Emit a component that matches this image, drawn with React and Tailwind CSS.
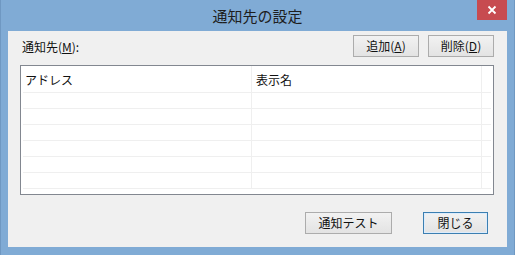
import React from 'react';

const font = { fontFamily: '"Noto Sans CJK JP", "Noto Sans", sans-serif' };

const Btn = ({ children, w, primary }) => (
  <button
    type="button"
    className={
      'h-[22px] flex items-center justify-center text-[12px] leading-none text-[#111] border bg-gradient-to-b from-[#f2f2f2] to-[#e3e3e3] ' +
      (primary ? 'border-[#3c7fb1] shadow-[inset_0_0_0_1px_#dcecfc]' : 'border-[#acacac]')
    }
    style={{ width: w }}
  >
    {children}
  </button>
);

const rows = [0, 1, 2, 3, 4, 5];

const App = () => {
  return (
    <div className="w-[515px] h-[255px] bg-[#80abd5] border-x border-[#6f98c2] flex flex-col" style={font}>
      {/* タイトルバー */}
      <div className="h-[31px] relative flex items-center justify-center">
        <span className="text-[15px] text-[#1e1e1e] mt-[1px]">通知先の設定</span>
        <div className="absolute right-[7px] top-0 w-[30px] h-[20px] bg-[#c74b50] flex items-center justify-center">
          <svg width="10" height="10" viewBox="0 0 10 10">
            <path d="M1.5 1.5 L8.5 8.5 M8.5 1.5 L1.5 8.5" stroke="#fff" strokeWidth="1.8" />
          </svg>
        </div>
      </div>

      {/* クライアント領域 */}
      <div className="mx-[7px] h-[216px] bg-[#f0f0f0] pl-[12px] pr-[13px] flex flex-col">
        <div className="flex items-end justify-between mt-[4px]">
          <span className="text-[12px] text-[#111] ml-[2px] mb-[1px]">
            通知先(<span className="underline">M</span>):
          </span>
          <div className="flex gap-[9px]">
            <Btn w={66}>
              追加(<span className="underline">A</span>)
            </Btn>
            <Btn w={66}>
              削除(<span className="underline">D</span>)
            </Btn>
          </div>
        </div>

        <div className="mt-[8px] h-[130px] bg-white border border-[#828790] relative overflow-hidden">
          <div className="flex h-[27px] border-b border-[#efefef] mx-[2px] text-[12px] text-[#111]">
            <div className="w-[229px] border-r border-[#efefef] flex items-center pl-[2px] pt-[2px]">アドレス</div>
            <div className="w-[230px] border-r border-[#efefef] flex items-center pl-[4px] pt-[2px]">表示名</div>
          </div>
          {rows.map((r) => (
            <div key={r} className="flex h-[16px] border-b border-[#efefef] mx-[2px]">
              <div className="w-[229px] border-r border-[#efefef]" />
              <div className="w-[230px] border-r border-[#efefef]" />
            </div>
          ))}
        </div>

        <div className="flex justify-end gap-[31px] mt-[17px] mr-[6px]">
          <Btn w={87}>通知テスト</Btn>
          <Btn w={65} primary>
            閉じる
          </Btn>
        </div>
      </div>
    </div>
  );
};

export default App;
